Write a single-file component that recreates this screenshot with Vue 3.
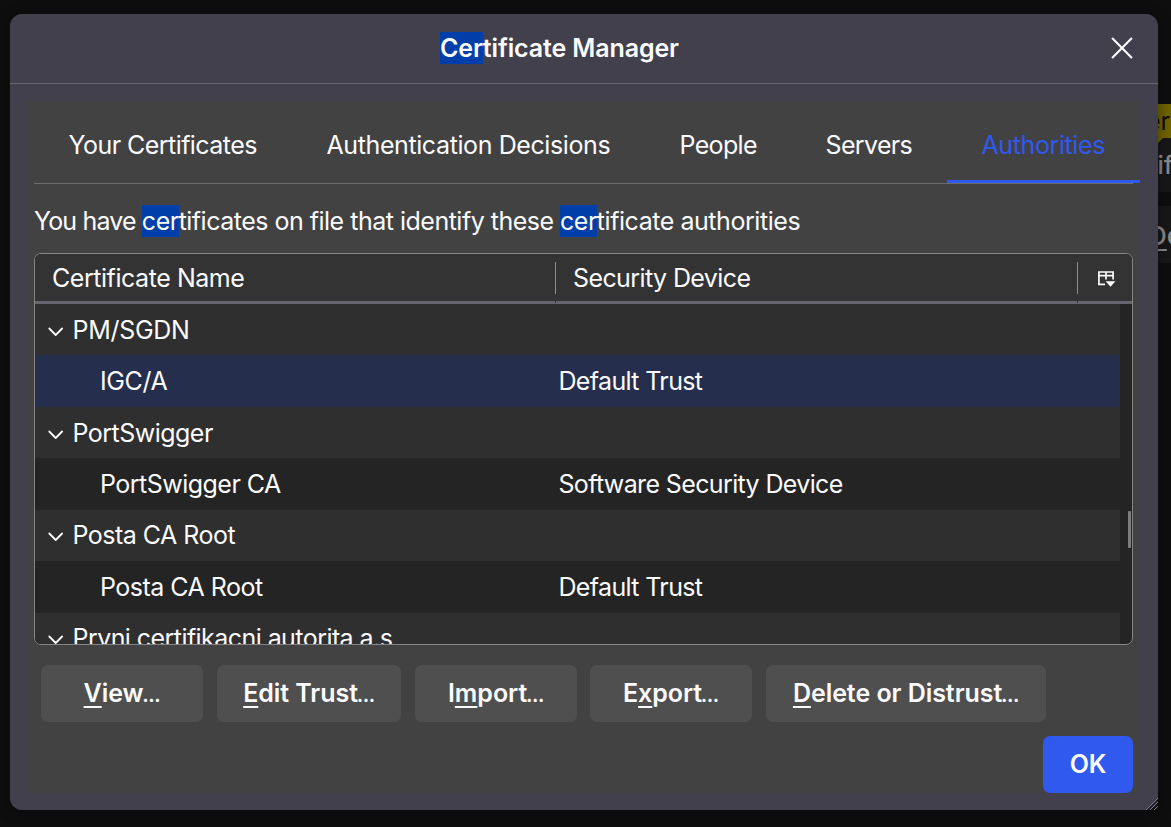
<script setup>
const tabs = [
  { label: 'Your Certificates', cls: 't1' },
  { label: 'Authentication Decisions', cls: 't2' },
  { label: 'People', cls: 't3' },
  { label: 'Servers', cls: 't4' },
  { label: 'Authorities', cls: 't5 active' },
]
const rows = [
  { name: 'PM/SGDN', parent: true, cls: 'pm' },
  { name: 'IGC/A', device: 'Default Trust', selected: true, cls: 'igc' },
  { name: 'PortSwigger', parent: true, cls: 'ps' },
  { name: 'PortSwigger CA', device: 'Software Security Device' },
  { name: 'Posta CA Root', parent: true },
  { name: 'Posta CA Root', device: 'Default Trust' },
  { name: 'Prvni certifikacni autorita a.s', parent: true, cls: 'prv' },
]
const buttons = [
  { pre: '', key: 'V', post: 'iew', cls: 'b1' },
  { pre: '', key: 'E', post: 'dit Trust', cls: 'b2' },
  { pre: 'I', key: 'm', post: 'port', cls: 'b3' },
  { pre: 'E', key: 'x', post: 'port', cls: 'b4' },
  { pre: '', key: 'D', post: 'elete or Distrust', cls: 'b5' },
]
</script>

<template>
  <div class="page">
    <div class="behind">
      <div class="tip">er</div>
      <svg class="tail" width="6" height="5" viewBox="0 0 6 5"><path d="M0 0H5L0 5Z" fill="#6e6200" /></svg>
      <div class="card"><span class="frag">if</span></div>
      <div class="card second"><span class="frag dfrag"><u>D</u>e</span></div>
    </div>
    <section class="dialog">
      <header class="titlebar">
        <h1><mark>Cer</mark>tificate Manager</h1>
        <svg class="close" width="22" height="22" viewBox="0 0 22 22"><path d="M1.6 1.6 20.4 20.4M20.4 1.6 1.6 20.4" stroke="#fbfbfe" stroke-width="2.1" stroke-linecap="round" /></svg>
      </header>
      <div class="panel">
        <nav class="tabs">
          <div v-for="t in tabs" :key="t.label" class="tab" :class="t.cls"><span>{{ t.label }}</span></div>
        </nav>
        <p class="desc"><span class="lead">You have </span><mark>cer</mark>tificates on file that identify these <mark>cer</mark><span class="end">tificate authorities</span></p>
        <div class="tree">
          <div class="thead">
            <div class="th name"><span>Certificate Name</span></div>
            <div class="th device"><span>Security Device</span></div>
            <div class="th picker">
              <svg width="18" height="17" viewBox="0 0 18 17"><path d="M7 13.3H.9V1H15.1V8.5M.9 4.6H15.1M8 1V8.5" fill="none" stroke="#fbfbfe" stroke-width="1.7" /><path d="M7.6 10.2H17.4L12.5 15.8Z" fill="#fbfbfe" /></svg>
            </div>
          </div>
          <div class="tbody">
            <div class="rows">
              <div v-for="(r, i) in rows" :key="i" class="row" :class="{ parent: r.parent, selected: r.selected }">
                <div class="cell first">
                  <svg v-if="r.parent" class="twisty" width="16" height="10" viewBox="0 0 16 10"><path d="M1.3 1.5 7.7 8 14.1 1.5" fill="none" stroke="#fbfbfe" stroke-width="1.8" stroke-linecap="round" stroke-linejoin="round" /></svg>
                  <span :class="r.cls">{{ r.name }}</span>
                </div>
                <div class="cell dev"><span>{{ r.device }}</span></div>
              </div>
            </div>
            <div class="scrolltrack"><div class="thumb"></div></div>
          </div>
        </div>
        <div class="actions">
          <button v-for="b in buttons" :key="b.key" :class="b.cls"><span>{{ b.pre }}<u>{{ b.key }}</u>{{ b.post }}<span class="dots">…</span></span></button>
        </div>
        <div class="footer"><button class="ok">OK</button></div>
      </div>
      <svg class="grip" width="12" height="12" viewBox="0 0 12 12"><path d="M0 12 12 0M4 12 12 4M8 12 12 8" stroke="#77767f" stroke-width="1" /><path d="M2 12 12 2M6 12 12 6M10 12 12 10" stroke="#17171a" stroke-width="1.2" /></svg>
    </section>
  </div>
</template>

<style>
html, body { margin: 0; background: #0e0e0e; }
</style>

<style scoped>
* { box-sizing: border-box; }
.page { position: relative; width: 1171px; height: 827px; padding: 14px 0 0 10px; overflow: hidden; background: #0e0e0e; font: 400 25px/32px Inter, "Liberation Sans", sans-serif; color: #fbfbfe; white-space: nowrap; }
.behind { position: absolute; left: 1145px; top: 104px; width: 26px; color: #88888a; }
.tip { height: 34px; background: #6e6200; color: #0a0a0a; padding-left: 1px; line-height: 35px; overflow: hidden; }
.tail { position: absolute; left: 13px; top: 34px; }
.card { height: 54px; background: #171717; overflow: hidden; padding: 11px 0 0 12.5px; }
.frag { display: block; font-weight: 500; }
.second { height: 57px; margin-top: 14px; padding: 14px 0 0 3px; }
.dfrag { font-size: 26px; }
.dialog { position: relative; width: 1148px; height: 796px; border-radius: 12px; background: #42404d; box-shadow: 0 2px 14px #00000066; }
.titlebar { display: flex; align-items: center; height: 70px; padding-bottom: 2px; border-bottom: 1px solid #67666f; }
h1 { margin: 0 0 0 430px; font-size: 25px; line-height: 32px; font-weight: 600; letter-spacing: -0.12px; }
mark { display: inline-block; height: 32px; background: #003eaa; color: inherit; }
.close { margin: 1px 25px 0 auto; }
.panel { width: 1113px; height: 692px; margin: 17px 0 0 17px; padding: 0 7px; background: #424242; }
.tabs { display: flex; height: 83px; border-bottom: 1px solid #6c6c6e; width: 1099px; }
.tab { flex: none; height: 82px; padding: 28px 0 0 34.5px; }
.t1 { width: 258px; letter-spacing: -0.55px; }
.t2 { width: 353px; letter-spacing: -0.4px; }
.t3 { width: 146px; letter-spacing: -0.65px; }
.t4 { width: 156px; letter-spacing: -0.65px; }
.t5 { width: 193px; letter-spacing: -0.4px; }
.active { color: #3059f0; border-bottom: 3px solid #3059f0; }
.desc { margin: 21px 0 0; height: 32px; letter-spacing: -0.5px; }
.lead { letter-spacing: -0.85px; }
.end { letter-spacing: -0.45px; }
.tree { display: flex; flex-direction: column; width: 1099px; height: 392px; margin-top: 16px; border: 1px solid #858585; border-radius: 7px; background: #242424; overflow: hidden; }
.thead { display: flex; height: 50px; flex: none; background: #333; border-bottom: 3px solid #67666f; }
.th { position: relative; display: flex; align-items: center; height: 47px; padding: 1px 0 0 17px; letter-spacing: -0.6px; }
.name { width: 521px; letter-spacing: -0.45px; }
.device { width: 522px; }
.name::after, .device::after { content: ""; position: absolute; right: 0; top: 8px; width: 1px; height: 32px; background: #8c8c8c; }
.name::before, .device::before { content: ""; position: absolute; right: 0; top: 47px; width: 1px; height: 2px; background: #333; }
.picker { flex: 1; padding: 4px 0 0 20px; }
.tbody { display: flex; flex: 1; overflow: hidden; }
.rows { width: 1085px; }
.row { display: flex; height: 51.45px; background: #242424; letter-spacing: -0.52px; }
.parent { background: #2f2f2f; }
.selected { background: #262e4d; }
.cell { display: flex; align-items: center; }
.first { width: 523px; padding-left: 65px; }
.dev { letter-spacing: -0.63px; padding-left: 0.4px; }
.pm { letter-spacing: -0.3px; }
.igc { letter-spacing: -0.4px; }
.prv { letter-spacing: -0.56px; }
.parent .first { padding-left: 13px; }
.twisty { margin-right: 8.5px; margin-top: 4px; }
.scrolltrack { flex: 1; padding: 207px 0 0 8px; }
.thumb { width: 3px; height: 37px; background: #7f7f7f; border-radius: 1px; }
.actions { display: flex; height: 57px; margin: 20px 0 0 7px; }
button { flex: none; height: 57px; padding: 0 0 2px; border: 0; border-radius: 7px; background: #4f4f4f; color: #fbfbfe; font: 600 25px/32px Inter, "Liberation Sans", sans-serif; letter-spacing: -0.05px; }
.b1 { width: 162px; margin-right: 14px; }
.b2 { width: 184px; margin-right: 14px; }
.b3 { width: 162px; margin-right: 13px; }
.b4 { width: 162px; margin-right: 14px; }
.b5 { width: 280px; }
.dots { margin-left: -1px; font-size: 16px; font-weight: 900; line-height: 1; }
u { text-decoration: underline; text-decoration-thickness: 2px; text-underline-offset: 4px; text-decoration-skip-ink: none; }
.footer { display: flex; justify-content: flex-end; margin-top: 14px; }
.ok { width: 90px; background: #3059f0; }
.grip { position: absolute; right: 0; bottom: 0; }
</style>
